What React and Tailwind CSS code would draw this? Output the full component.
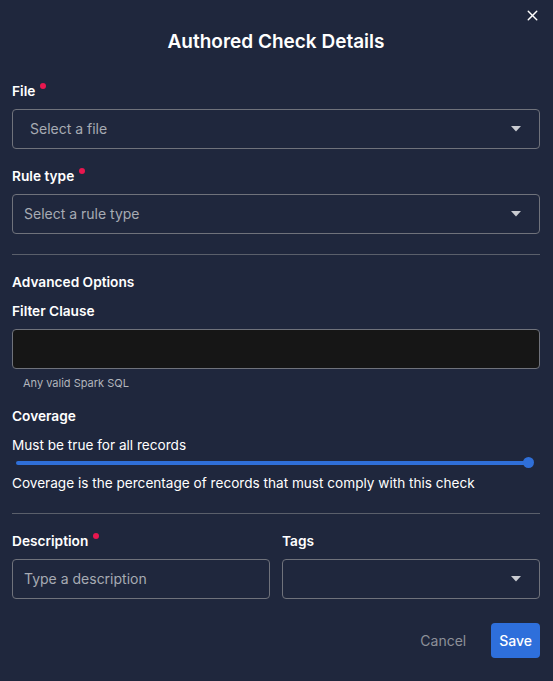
import { X } from "lucide-react";

const Required = () => (
  <span className="ml-[5px] mt-[2px] inline-block h-[6px] w-[6px] self-start rounded-full bg-[#e8174f]" />
);

const Label = ({ children, required, className = "" }) => (
  <div className={`flex h-5 items-center text-[13.7px] font-semibold text-white ${className}`}>
    <span>{children}</span>
    {required && <Required />}
  </div>
);

const Caret = () => (
  <svg width="10" height="6" viewBox="0 0 10 6" className="shrink-0">
    <path d="M0 0 L10 0 L5 5.5 Z" fill="#c9cbd1" />
  </svg>
);

const SelectBox = ({ placeholder, padLeft = "pl-[11px]" }) => (
  <div
    className={`mt-2 flex h-10 items-center justify-between rounded border border-[#6f727b] ${padLeft} pr-[18px]`}
  >
    <span className="text-sm text-[#a7abb3]">{placeholder}</span>
    <Caret />
  </div>
);

export default function App() {
  return (
    <div
      className="relative min-h-[681px] w-full bg-[#1f273d] pl-3 pr-[13px] text-white"
      style={{ fontFamily: "Inter, 'Noto Sans', sans-serif" }}
    >
      <button className="absolute right-[12px] top-[7px] text-white">
        <X className="h-[17px] w-[17px]" strokeWidth={2} />
      </button>

      <h1 className="pt-7 text-center text-[19px] font-semibold leading-7">
        Authored Check Details
      </h1>

      <Label required className="mt-[25px]">File</Label>
      <SelectBox placeholder="Select a file" padLeft="pl-[17px]" />

      <Label required className="mt-[17px]">Rule type</Label>
      <SelectBox placeholder="Select a rule type" />

      <div className="mt-5 h-px bg-[#5a5f6b]" />

      <Label className="mt-[17px]">Advanced Options</Label>
      <Label className="mt-[9px]">Filter Clause</Label>
      <div className="mt-2 h-10 rounded border border-[#6f727b] bg-[#161616]" />
      <div className="mt-[6px] pl-[11px] text-[11px] leading-4 text-[#b2b5bc]">
        Any valid Spark SQL
      </div>

      <Label className="mt-[15px]">Coverage</Label>
      <div className="mt-[9px] text-[13.6px] leading-5 text-white">
        Must be true for all records
      </div>
      <div className="relative flex h-4 items-center pl-1 pr-3">
        <div className="h-[4px] w-full rounded-full bg-[#2f6fd8]" />
        <div className="absolute right-[6px] top-[2px] h-[11px] w-[11px] rounded-full bg-[#2f6fd8]" />
      </div>
      <div className="mt-[2px] text-[13.6px] leading-5 text-white">
        Coverage is the percentage of records that must comply with this check
      </div>

      <div className="mt-5 h-px bg-[#5a5f6b]" />

      <div className="mt-[17px] grid grid-cols-2 gap-3">
        <div>
          <Label required>Description</Label>
          <div className="mt-2 flex h-10 items-center rounded border border-[#6f727b] pl-[11px]">
            <span className="text-sm text-[#a7abb3]">Type a description</span>
          </div>
        </div>
        <div>
          <Label>Tags</Label>
          <div className="mt-2 flex h-10 items-center justify-end rounded border border-[#6f727b] pr-[18px]">
            <Caret />
          </div>
        </div>
      </div>

      <div className="mt-6 flex items-center justify-end gap-[25px]">
        <button className="text-sm text-[#8d9099]">Cancel</button>
        <button className="h-[35px] rounded bg-[#2e6fdb] px-[8px] text-sm font-medium text-white">
          Save
        </button>
      </div>
    </div>
  );
}
